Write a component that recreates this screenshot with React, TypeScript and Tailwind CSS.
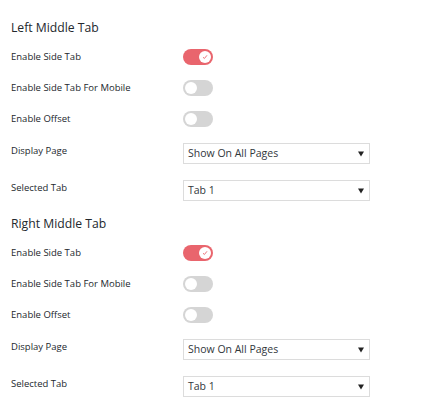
import React from "react";

function Toggle({ on }: { on: boolean }) {
  return on ? (
    <div className="relative h-[16px] w-[30px] rounded-full bg-[#e9656d]">
      <div className="absolute right-[2px] top-[2px] flex h-[12px] w-[12px] items-center justify-center rounded-full bg-white">
        <svg width="6" height="6" viewBox="0 0 6 6">
          <path d="M1 3.2 L2.4 4.5 L5 1.3" fill="none" stroke="#e9656d" strokeWidth="0.9" />
        </svg>
      </div>
    </div>
  ) : (
    <div className="relative h-[16px] w-[30px] rounded-full bg-[#d5d5d5]">
      <div className="absolute left-[2px] top-[2px] h-[12px] w-[12px] rounded-full bg-white" />
    </div>
  );
}

function Select({ value }: { value: string }) {
  return (
    <div className="flex h-[21px] w-[187px] items-center justify-between border border-[#dcdcdc] bg-white pl-[4px] pr-[5px] text-[10.5px] text-[#32373c]">
      <span>{value}</span>
      <svg width="6" height="6" viewBox="0 0 6 6">
        <path d="M0 0.5 H6 L3 5.5 Z" fill="#222" />
      </svg>
    </div>
  );
}

function Section({ title }: { title: string }) {
  return (
    <div className="flex flex-col">
      <div className="flex h-[26px] items-center text-[12.2px] text-[#23282d]">{title}</div>
      <div className="mt-[8px] grid grid-cols-[172px_1fr] gap-y-[15px] text-[9.5px] text-[#23282d]">
        <div className="flex h-[16px] items-center">Enable Side Tab</div>
        <Toggle on />
        <div className="flex h-[16px] items-center">Enable Side Tab For Mobile</div>
        <Toggle on={false} />
        <div className="flex h-[16px] items-center">Enable Offset</div>
        <Toggle on={false} />
        <div className="mt-[1px] flex h-[21px] items-start pt-[1px]">Display Page</div>
        <div className="mt-[1px]">
          <Select value="Show On All Pages" />
        </div>
        <div className="mt-[1px] flex h-[21px] items-start pt-[1px]">Selected Tab</div>
        <div className="mt-[1px]">
          <Select value="Tab 1" />
        </div>
      </div>
    </div>
  );
}

export default function App() {
  return (
    <div
      className="h-[409px] w-[421px] bg-white pl-[11px] pt-[15px]"
      style={{ fontFamily: '"Open Sans", "Noto Sans", sans-serif' }}
    >
      <div className="flex flex-col gap-[10px]">
        <Section title="Left Middle Tab" />
        <Section title="Right Middle Tab" />
      </div>
    </div>
  );
}
